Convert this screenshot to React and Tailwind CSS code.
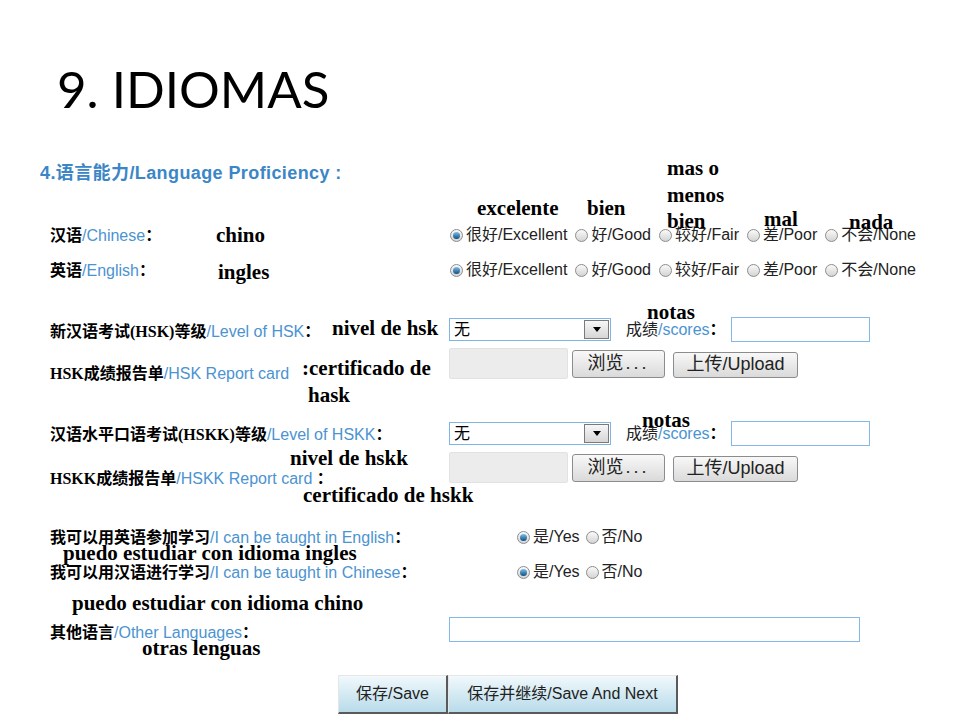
import React from 'react';

const sans = "font-['Liberation_Sans','Noto_Sans_CJK_SC',sans-serif]";
const serifCn = "font-['Liberation_Serif','Noto_Sans_CJK_SC',serif]";

function Radio({ checked }) {
  return (
    <span className="w-[13px] h-[13px] rounded-full border border-[#8d8d8d] bg-linear-to-b from-[#fafafa] to-[#d4d4d4] flex items-center justify-center shrink-0">
      {checked && <span className="w-[7px] h-[7px] rounded-full bg-linear-to-b from-[#7cc0ea] to-[#0a4f80]" />}
    </span>
  );
}

function RadioGroup({ options }) {
  return (
    <div className={`flex items-center gap-[8px] text-[16px] text-[#222] ${sans}`}>
      {options.map((o, i) => (
        <label key={o} className="flex items-center gap-[3px]">
          <Radio checked={i === 0} />
          <span>{o}</span>
        </label>
      ))}
    </div>
  );
}

function Label({ cn, en, colon = '：' }) {
  return (
    <span className="text-[16px] leading-[18px] whitespace-nowrap">
      <span className={`font-bold text-black ${serifCn}`}>{cn}</span>
      <span className={`text-[#4b93d1] ${sans}`}>{en}</span>
      <span className={`font-bold text-black ${sans}`}>{colon}</span>
    </span>
  );
}

function Select() {
  return (
    <div className="w-[162px] h-[23px] border border-[#7fb5e6] bg-white flex items-center justify-between">
      <span className={`pl-[4px] text-[16px] ${sans}`}>无</span>
      <span className="w-[25px] h-[19px] mr-[1px] border border-[#7a7a7a] bg-linear-to-b from-[#f7f7f7] to-[#d6d6d6] flex items-center justify-center">
        <span className="w-0 h-0 border-l-[4px] border-r-[4px] border-t-[5px] border-l-transparent border-r-transparent border-t-black" />
      </span>
    </div>
  );
}

function Scores() {
  return (
    <div className="flex items-center">
      <span className="ml-[15px] text-[16px] whitespace-nowrap">
        <span className={`text-[#222] ${sans}`}>成绩</span>
        <span className={`text-[#4b93d1] ${sans}`}>/scores</span>
        <span className={`font-bold ${sans}`}>：</span>
      </span>
      <div className="ml-[5px] w-[139px] h-[25px] border border-[#84b8e6] bg-white" />
    </div>
  );
}

function FileRow() {
  return (
    <div className={`flex items-center ${sans}`}>
      <div className="w-[119px] h-[31px] bg-[#ececec] border border-[#e2e2e2] rounded-[2px]" />
      <button className="ml-[4px] w-[93px] h-[28px] rounded-[3px] border border-[#8c8c8c] bg-linear-to-b from-[#f8f8f8] to-[#dadada] text-[18px] text-[#222] flex items-center justify-center">
        浏览<span className="tracking-[3px] ml-[2px]">...</span>
      </button>
      <button className="ml-[8px] w-[125px] h-[26px] mt-[2px] rounded-[3px] border border-[#8c8c8c] bg-linear-to-b from-[#f8f8f8] to-[#dadada] text-[18px] text-[#222] flex items-center justify-center">
        上传/Upload
      </button>
    </div>
  );
}

function YesNo() {
  return (
    <div className={`ml-[68px] flex items-center gap-[6px] text-[16px] text-[#222] ${sans}`}>
      <label className="flex items-center gap-[3px]"><Radio checked /><span>是/Yes</span></label>
      <label className="flex items-center gap-[3px]"><Radio /><span>否/No</span></label>
    </div>
  );
}

const notes = [
  { t: 'mas o', x: 667, y: 158 },
  { t: 'menos', x: 667, y: 185 },
  { t: 'bien', x: 667, y: 211 },
  { t: 'excelente', x: 477, y: 198 },
  { t: 'bien', x: 587, y: 198 },
  { t: 'mal', x: 764, y: 209 },
  { t: 'nada', x: 849, y: 212 },
  { t: 'chino', x: 216, y: 225 },
  { t: 'ingles', x: 218, y: 262 },
  { t: 'nivel de hsk', x: 332, y: 318 },
  { t: 'notas', x: 647, y: 302 },
  { t: ':certificado de', x: 302, y: 358 },
  { t: 'hask', x: 308, y: 385 },
  { t: 'notas', x: 642, y: 410 },
  { t: 'nivel de hskk', x: 290, y: 448 },
  { t: 'certificado de hskk', x: 303, y: 485 },
  { t: 'puedo estudiar con idioma ingles', x: 63, y: 543 },
  { t: 'puedo estudiar con idioma chino', x: 72, y: 593 },
  { t: 'otras lenguas', x: 142, y: 638 },
];

export default function App() {
  const levels = ['很好/Excellent', '好/Good', '较好/Fair', '差/Poor', '不会/None'];
  return (
    <div className="relative w-[960px] h-[720px] bg-white overflow-hidden">
      <h1 className="pt-[64px] pl-[57px] h-[114px] text-[51px] leading-[50px] text-black font-['Lato','Open_Sans',sans-serif]">
        9. IDIOMAS
      </h1>

      <div className="pl-[50px] mt-[48px]">
        <div className={`-ml-[10px] h-[22px] flex items-center text-[18px] tracking-[0.4px] font-bold text-[#3b86c7] ${sans}`}>
          4.语言能力/Language Proficiency :
        </div>

        <div className="mt-[40px] h-[22px] flex items-center">
          <div className="w-[400px]"><Label cn="汉语" en="/Chinese" /></div>
          <RadioGroup options={levels} />
        </div>

        <div className="mt-[13px] h-[22px] flex items-center">
          <div className="w-[400px]"><Label cn="英语" en="/English" /></div>
          <RadioGroup options={levels} />
        </div>

        <div className="mt-[36px] h-[25px] flex items-center">
          <div className="w-[399px] pt-[2px]"><Label cn="新汉语考试(HSK)等级" en="/Level of HSK" /></div>
          <Select />
          <Scores />
        </div>

        <div className="mt-[6px] h-[32px] flex items-start">
          <div className="w-[399px] pt-[13px]"><Label cn="HSK成绩报告单" en="/HSK Report card" colon="" /></div>
          <FileRow />
        </div>

        <div className="mt-[41px] h-[25px] flex items-center">
          <div className="w-[399px]"><Label cn="汉语水平口语考试(HSKK)等级" en="/Level of HSKK" /></div>
          <Select />
          <Scores />
        </div>

        <div className="mt-[6px] h-[31px] flex items-start">
          <div className="w-[399px] pt-[14px]"><Label cn="HSKK成绩报告单" en="/HSKK Report card" colon=" ：" /></div>
          <FileRow />
        </div>

        <div className="mt-[42px] h-[24px] flex items-center">
          <div className="w-[399px]"><Label cn="我可以用英语参加学习" en="/I can be taught in English" /></div>
          <YesNo />
        </div>

        <div className="mt-[11px] h-[24px] flex items-center">
          <div className="w-[399px]"><Label cn="我可以用汉语进行学习" en="/I can be taught in Chinese" /></div>
          <YesNo />
        </div>

        <div className="mt-[33px] h-[25px] flex items-center">
          <div className="w-[399px] pt-[4px]"><Label cn="其他语言" en="/Other Languages" /></div>
          <div className="w-[411px] h-[25px] border border-[#84b8e6] bg-white" />
        </div>

        <div className={`mt-[33px] ml-[288px] flex text-[16px] text-[#222] ${sans}`}>
          <button className="w-[110px] h-[39px] bg-linear-to-b from-[#f1f9fc] to-[#b8dbea] border-t border-l border-[#e6e6e6] border-r-2 border-b-2 border-r-[#5a5a5a] border-b-[#5a5a5a]">
            保存/Save
          </button>
          <button className="w-[230px] h-[39px] bg-linear-to-b from-[#f1f9fc] to-[#b8dbea] border-t border-l border-[#e6e6e6] border-r-2 border-b-2 border-r-[#5a5a5a] border-b-[#5a5a5a]">
            保存并继续/Save And Next
          </button>
        </div>
      </div>

      {notes.map((n, i) => (
        <span
          key={i}
          className="absolute whitespace-nowrap text-[21px] leading-[21px] font-bold text-black font-['Liberation_Serif',serif]"
          style={{ left: n.x, top: n.y }}
        >
          {n.t}
        </span>
      ))}
    </div>
  );
}
